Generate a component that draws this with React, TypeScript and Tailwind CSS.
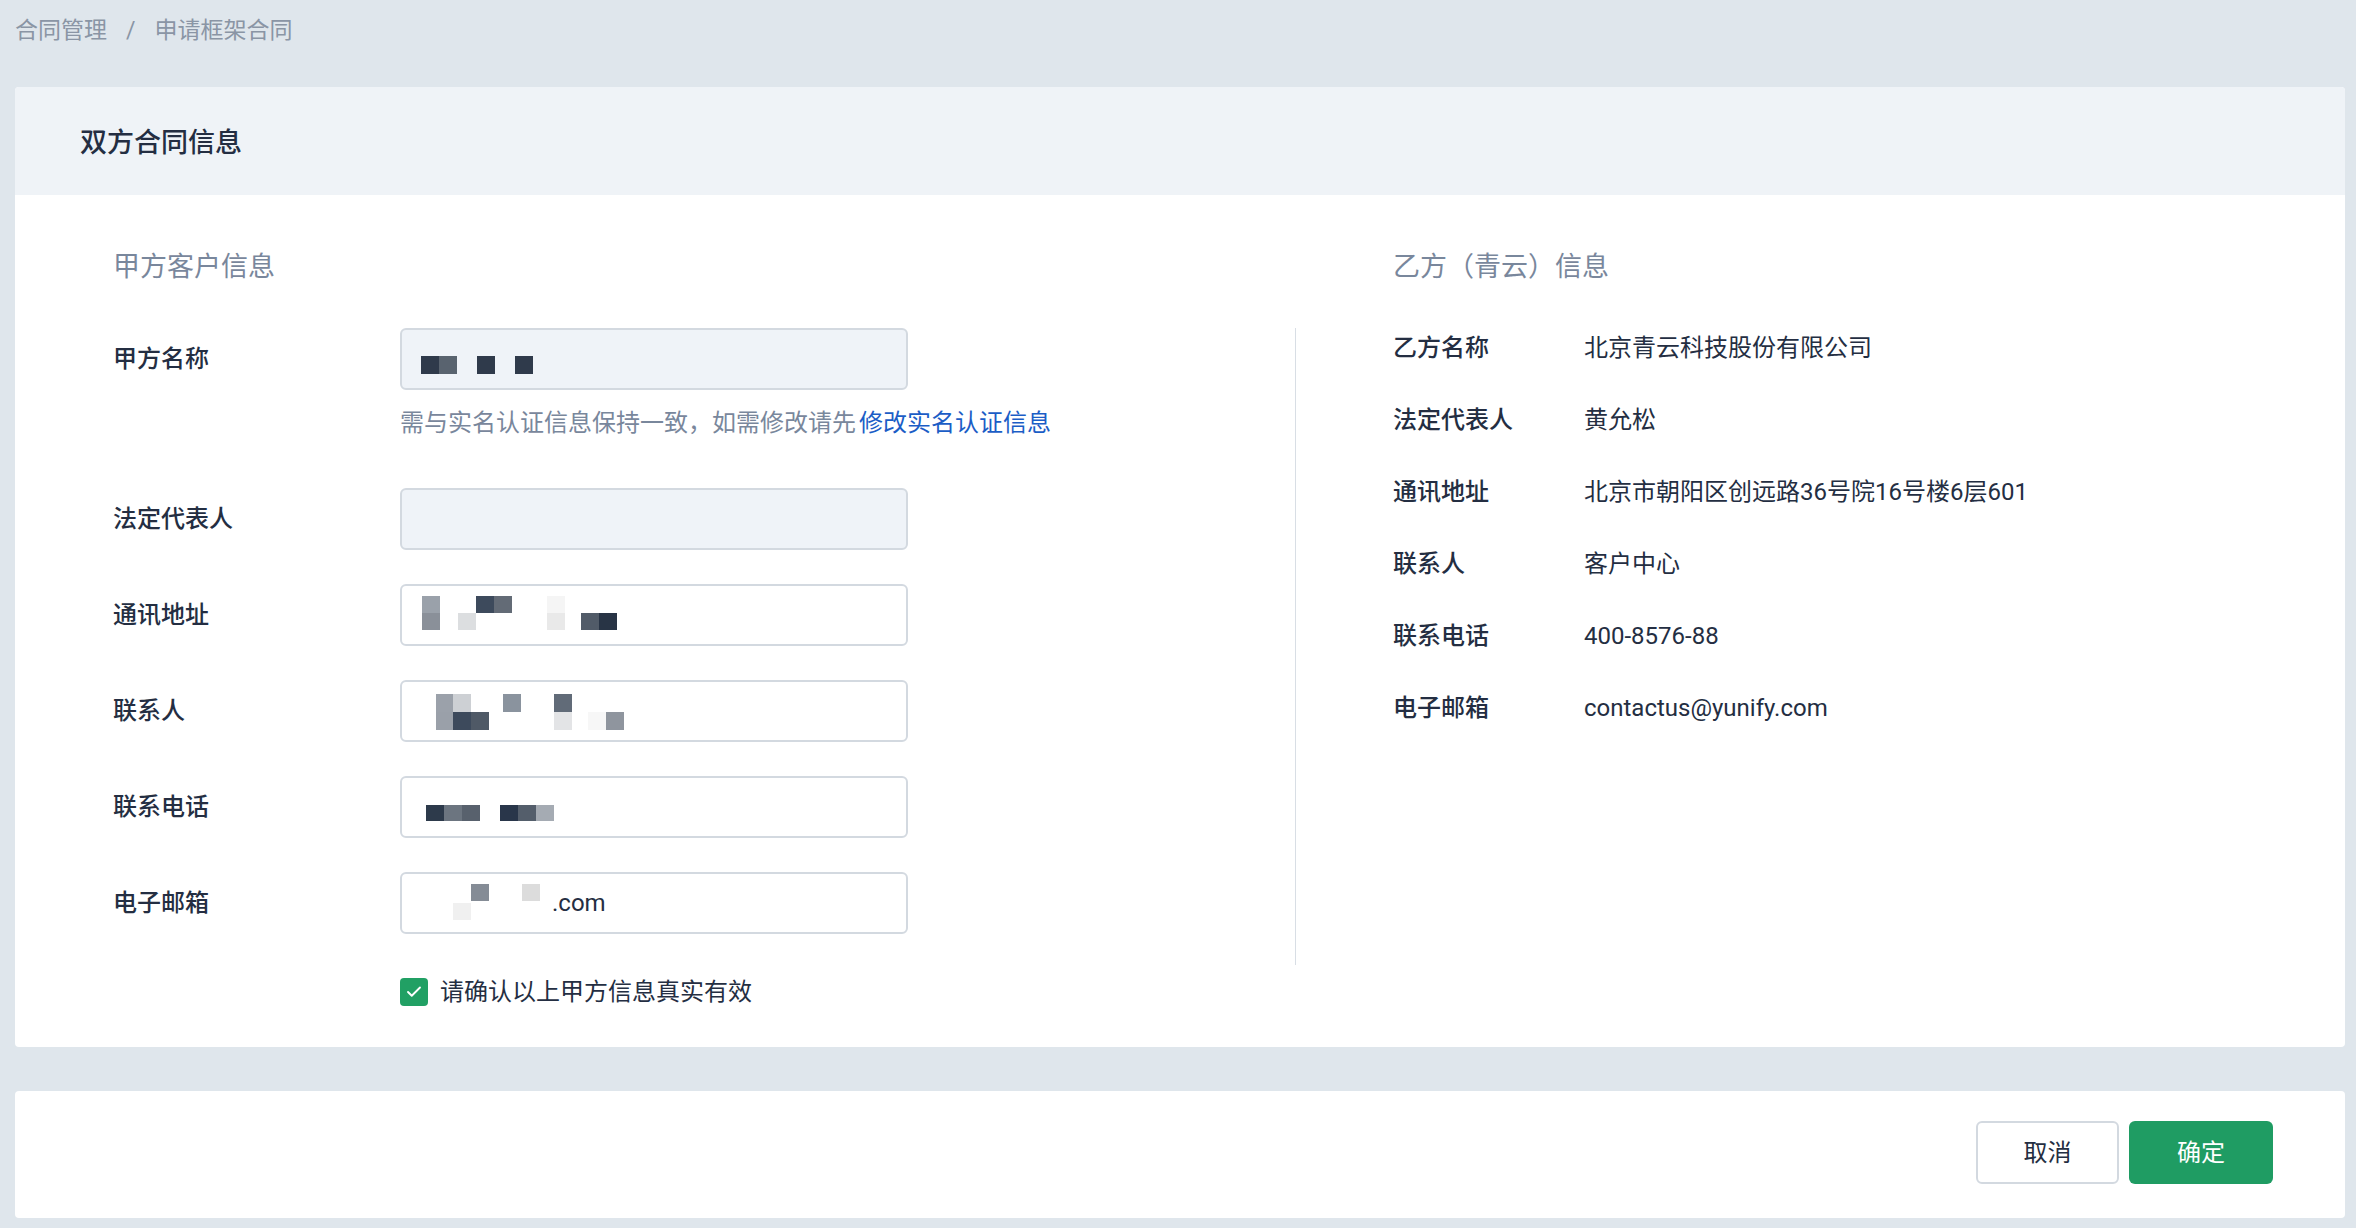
import React from 'react';
import { Check } from 'lucide-react';

type Px = [number, number, string];

// redacted values in the screenshot are mosaic blocks, drawn as tiny svg pictures
const Mosaic = ({ blocks, w = 18, h = 18, width = 260 }: { blocks: Px[]; w?: number; h?: number; width?: number }) => (
  <svg width={width} height={58} className="block shrink-0">
    {blocks.map(([x, y, c], i) => (
      <rect key={i} x={x} y={y} width={w} height={h} fill={c} />
    ))}
  </svg>
);

const Field = ({ disabled, children }: { disabled?: boolean; children?: React.ReactNode }) => (
  <div
    className={`w-[508px] h-[62px] border-2 border-[#d3d9e0] rounded-[6px] flex items-center overflow-hidden ${
      disabled ? 'bg-[#eff3f8]' : 'bg-white'
    }`}
  >
    {children}
  </div>
);

const Label = ({ text }: { text: string }) => (
  <div className="w-[287px] h-[62px] flex items-center text-[24px] font-medium text-[#242e42] shrink-0">{text}</div>
);

const partyB = [
  { label: '乙方名称', value: '北京青云科技股份有限公司' },
  { label: '法定代表人', value: '黄允松' },
  { label: '通讯地址', value: '北京市朝阳区创远路36号院16号楼6层601' },
  { label: '联系人', value: '客户中心' },
  { label: '联系电话', value: '400-8576-88' },
  { label: '电子邮箱', value: 'contactus@yunify.com' },
];

export default function App() {
  return (
    <div className="min-h-screen bg-[#dfe6ec] pl-[15px] pr-[11px] pt-[13px] pb-[10px] font-['Roboto','Noto_Sans_CJK_SC',sans-serif]">
      {/* Breadcrumb */}
      <div className="h-[35px] leading-[35px] text-[23px] text-[#8a95a5] flex">
        <span>合同管理</span>
        <span className="mx-[19px]">/</span>
        <span>申请框架合同</span>
      </div>

      {/* Contract info card */}
      <div className="mt-[39px] bg-white rounded-[4px] overflow-hidden">
        <div className="h-[108px] bg-[#eff3f7] flex items-center pl-[65px] pt-[4px]">
          <h1 className="text-[27px] font-medium text-[#242e42]">双方合同信息</h1>
        </div>

        <div className="flex pb-[38px]">
          {/* Party A */}
          <div className="w-[1280px] shrink-0 pl-[98px] pt-[53px]">
            <div className="text-[27px] leading-[38px] text-[#79879c]">甲方客户信息</div>
            <div className="mt-[42px] flex flex-col gap-[34px]">
              <div className="flex items-start">
                <Label text="甲方名称" />
                <div>
                  <Field disabled>
                    <Mosaic
                      blocks={[
                        [19, 26, '#2f3a4b'],
                        [37, 26, '#59636f'],
                        [75, 26, '#2f3a4b'],
                        [113, 26, '#2f3a4b'],
                      ]}
                    />
                  </Field>
                  <p className="mt-[16px] mb-[14px] leading-[34px] text-[24px] text-[#79879c] whitespace-nowrap">
                    需与实名认证信息保持一致，如需修改请先<span className="ml-[3px] text-[#1b5dc6]">修改实名认证信息</span>
                  </p>
                </div>
              </div>

              <div className="flex items-start">
                <Label text="法定代表人" />
                <Field disabled />
              </div>

              <div className="flex items-start">
                <Label text="通讯地址" />
                <Field>
                  <Mosaic
                    h={17}
                    blocks={[
                      [20, 10, '#9aa1aa'],
                      [20, 27, '#8a9099'],
                      [56, 27, '#dcdee0'],
                      [74, 10, '#3d4a5c'],
                      [92, 10, '#636b76'],
                      [145, 10, '#f5f5f5'],
                      [145, 27, '#e9e9e9'],
                      [179, 27, '#515b68'],
                      [197, 27, '#283445'],
                    ]}
                  />
                </Field>
              </div>

              <div className="flex items-start">
                <Label text="联系人" />
                <Field>
                  <Mosaic
                    blocks={[
                      [34, 12, '#9ba1aa'],
                      [34, 30, '#9aa0a9'],
                      [51, 12, '#cdd0d4'],
                      [51, 30, '#3d4a5c'],
                      [69, 30, '#4f5966'],
                      [101, 12, '#8a939e'],
                      [152, 12, '#616b78'],
                      [152, 30, '#e3e4e6'],
                      [186, 30, '#f7f7f7'],
                      [204, 30, '#8f959e'],
                    ]}
                  />
                </Field>
              </div>

              <div className="flex items-start">
                <Label text="联系电话" />
                <Field>
                  <Mosaic
                    h={16}
                    blocks={[
                      [24, 27, '#2d3a4b'],
                      [42, 27, '#6c7580'],
                      [60, 27, '#58616d'],
                      [98, 27, '#29364a'],
                      [116, 27, '#545e6b'],
                      [134, 27, '#a5abb3'],
                    ]}
                  />
                </Field>
              </div>

              <div className="flex items-start">
                <Label text="电子邮箱" />
                <Field>
                  <Mosaic
                    width={150}
                    h={17}
                    blocks={[
                      [69, 10, '#858c96'],
                      [120, 10, '#dcdcdc'],
                      [51, 29, '#f0f0f0'],
                    ]}
                  />
                  <span className="text-[24px] text-[#242e42]">.com</span>
                </Field>
              </div>

              <div className="mt-[7px] pl-[287px] flex items-center gap-[12px] h-[34px]">
                <span className="w-[28px] h-[28px] rounded-[4px] bg-[#21a064] flex items-center justify-center">
                  <Check className="w-[18px] h-[18px] text-white" strokeWidth={2.5} />
                </span>
                <span className="text-[24px] text-[#242e42]">请确认以上甲方信息真实有效</span>
              </div>
            </div>
          </div>

          {/* divider */}
          <div className="w-px bg-[#d8dee5] mt-[133px] h-[637px] shrink-0" />

          {/* Party B */}
          <div className="flex-1 pl-[97px] pt-[53px]">
            <div className="text-[27px] leading-[38px] text-[#79879c]">乙方（青云）信息</div>
            <div className="mt-[45px] flex flex-col gap-[38px]">
              {partyB.map(r => (
                <div key={r.label} className="flex leading-[34px] text-[24px] text-[#242e42]">
                  <span className="w-[191px] shrink-0 font-medium">{r.label}</span>
                  <span>{r.value}</span>
                </div>
              ))}
            </div>
          </div>
        </div>
      </div>

      {/* Footer actions */}
      <div className="mt-[44px] h-[127px] bg-white rounded-[4px] flex items-center justify-end gap-[10px] pr-[72px] pb-[4px]">
        <button className="w-[143px] h-[63px] rounded-[6px] border-2 border-[#d3d9e0] bg-white text-[24px] text-[#242e42]">
          取消
        </button>
        <button className="w-[144px] h-[63px] rounded-[6px] bg-[#1f9c63] text-[24px] text-white">确定</button>
      </div>
    </div>
  );
}
